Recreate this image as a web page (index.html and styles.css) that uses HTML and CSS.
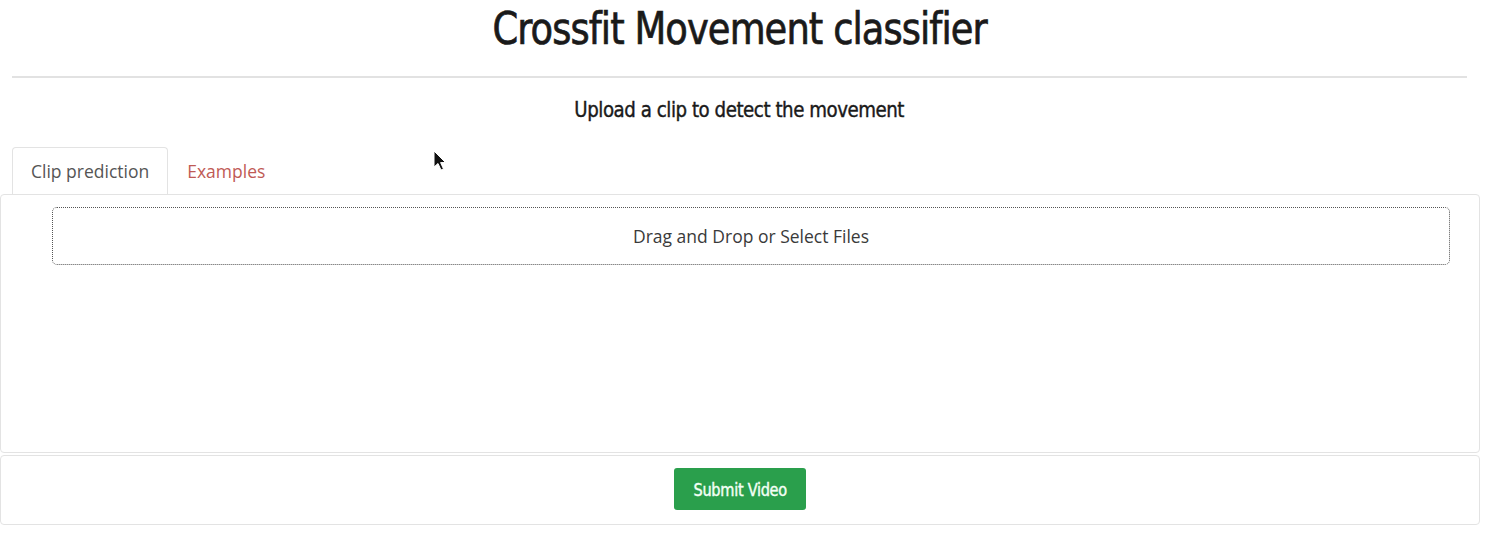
FILE: index.html
```html
<!DOCTYPE html>
<html>
<head>
<meta charset="utf-8">
<title>Crossfit Movement classifier</title>
<link rel="stylesheet" href="styles.css">
</head>
<body>
<div class="app">
  <header class="header">
    <h1 class="title"><span class="squeeze">Crossfit Movement classifier</span></h1>
    <hr class="rule">
    <h3 class="subtitle"><span class="squeeze">Upload a clip to detect the movement</span></h3>
  </header>
  <nav class="tabs">
    <div class="tab tab-active">Clip prediction</div>
    <div class="tab tab-link">Examples</div>
  </nav>
  <section class="panel">
    <div class="dropzone">Drag and Drop or Select Files</div>
  </section>
  <section class="actions">
    <button class="submit"><span class="squeeze">Submit Video</span></button>
  </section>
  <svg class="cursor" width="14" height="22" viewBox="0 0 14 22"><path d="M1 1 L1 17 L5 13.5 L8 20 L10.5 19 L7.6 12.6 L12.5 12.5 Z" fill="#111" stroke="#fff" stroke-width="1"/></svg>
</div>
</body>
</html>
```
FILE: styles.css
```css
html, body {
  margin: 0;
  padding: 0;
  background: #ffffff;
}
.app {
  position: relative;
  width: 1480px;
  font-family: "Open Sans", "Noto Sans", sans-serif;
  color: #333;
}
.header {
  margin: 0 13px 0 12px;
  display: flex;
  flex-direction: column;
}
.squeeze {
  display: inline-block;
  font-stretch: condensed;
}
.title {
  margin: 0;
  font-family: "DejaVu Sans", sans-serif;
  font-weight: normal;
  font-size: 45px;
  line-height: 58px;
  letter-spacing: -1px;
  text-align: center;
  color: #1a1a1a;
  -webkit-text-stroke: 0.7px #1a1a1a;
}
.title .squeeze {
  transform: scaleX(0.91);
}
.rule {
  margin: 18px 0 0 0;
  border: 0;
  border-top: 2px solid #e2e2e2;
  height: 0;
}
.subtitle {
  margin: 16px 0 0 0;
  font-family: "DejaVu Sans", sans-serif;
  font-weight: normal;
  font-size: 22px;
  line-height: 31px;
  letter-spacing: -0.5px;
  text-align: center;
  color: #1a1a1a;
  -webkit-text-stroke: 0.4px #1a1a1a;
}
.subtitle .squeeze {
  transform: scaleX(0.92);
}
.tabs {
  display: flex;
  margin: 22px 13px 0 12px;
  height: 47px;
}
.tab {
  box-sizing: border-box;
  height: 47px;
  padding: 0 18px;
  font-size: 17.5px;
  line-height: 46px;
  border: 1px solid transparent;
  border-bottom: 0;
}
.tab-active {
  border-color: #e3e3e3;
  border-radius: 4px 4px 0 0;
  color: #555;
  background: #fff;
}
.tab-link {
  color: #bf5a55;
}
.panel {
  box-sizing: border-box;
  height: 259px;
  border: 1px solid #e3e3e3;
  border-radius: 4px;
  padding: 12px 29px 0 51px;
}
.dropzone {
  box-sizing: border-box;
  height: 58px;
  border: 1px dotted #555;
  border-radius: 5px;
  display: flex;
  align-items: center;
  justify-content: center;
  font-size: 17.5px;
  color: #3a3a3a;
  padding-bottom: 1px;
}
.actions {
  box-sizing: border-box;
  margin-top: 2px;
  height: 70px;
  border: 1px solid #e3e3e3;
  border-radius: 4px;
  display: flex;
  justify-content: center;
  align-items: flex-start;
  padding-top: 12px;
}
.submit {
  width: 132px;
  height: 42px;
  border: 0;
  border-radius: 3px;
  background: #2a9f4c;
  color: #f4fff6;
  font-family: "DejaVu Sans", sans-serif;
  font-weight: normal;
  font-size: 17px;
  letter-spacing: -0.3px;
  padding: 0 0 0 0;
  -webkit-text-stroke: 0.4px #f4fff6;
}
.submit .squeeze {
  transform: scaleX(0.95);
  padding-top: 2px;
}
.cursor {
  position: absolute;
  left: 433px;
  top: 150px;
}
```
